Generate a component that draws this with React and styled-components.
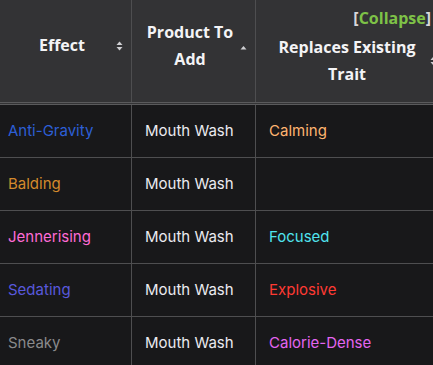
import React from 'react';
import styled, { createGlobalStyle } from 'styled-components';

const GlobalStyle = createGlobalStyle`
  html, body {
    margin: 0;
    padding: 0;
    background: #18181a;
  }
`;

const Wrap = styled.div`
  width: 433px;
  height: 365px;
  overflow: hidden;
  background: #18181a;
  font-family: Inter, "Noto Sans", sans-serif;
`;

const Table = styled.table`
  border-collapse: collapse;
  table-layout: fixed;
  width: 445px;
`;

const Th = styled.th`
  width: ${p => p.w}px;
  height: 85px;
  padding: 3px 8px 14px 8px;
  background: #333335;
  color: #f4f4f6;
  font-family: "Open Sans", Inter, sans-serif;
  font-size: 16px;
  font-weight: 700;
  line-height: 27px;
  border-left: ${p => (p.first ? 'none' : '1px solid #4e4e50')};
  border-bottom: 3px double #5a5a5c;
  vertical-align: middle;
  box-sizing: content-box;
`;

const HeadInner = styled.div`
  display: flex;
  align-items: center;
`;

const Label = styled.div`
  flex: 1;
  text-align: center;
`;

const Collapse = styled.div`
  text-align: right;
  line-height: 31px;
  padding-right: 6px;
  color: #d8d8da;
  a {
    color: #7ec247;
    text-decoration: none;
  }
`;

const Td = styled.td`
  height: 22px;
  padding: 15px 8px 15px ${p => (p.first ? 8 : 13)}px;
  font-size: 15px;
  font-weight: 400;
  line-height: 22px;
  color: ${p => p.color || '#ebebf0'};
  border-left: ${p => (p.first ? 'none' : '1px solid #4e4e50')};
  border-bottom: 1px solid #4e4e50;
  white-space: nowrap;
`;

const SortIcon = ({ dir }) => (
  <svg width="7" height="10" viewBox="0 0 7 10" style={{ flex: 'none' }}>
    {dir === 'asc' ? (
      <path d="M3.5 5 L6.5 8.5 L0.5 8.5 Z" fill="#cfcfd2" />
    ) : (
      <>
        <path d="M3.5 0.5 L6.5 4 L0.5 4 Z" fill="#cfcfd2" />
        <path d="M3.5 9.5 L6.5 6 L0.5 6 Z" fill="#cfcfd2" />
      </>
    )}
  </svg>
);

const rows = [
  { effect: 'Anti-Gravity', ec: '#2d5fd6', trait: 'Calming', tc: '#ffb470' },
  { effect: 'Balding', ec: '#d48a2c', trait: '', tc: '' },
  { effect: 'Jennerising', ec: '#ff6bd6', trait: 'Focused', tc: '#50e4ee' },
  { effect: 'Sedating', ec: '#5858dc', trait: 'Explosive', tc: '#ff3a33' },
  { effect: 'Sneaky', ec: '#8a8a8c', trait: 'Calorie-Dense', tc: '#e465f0' },
];

export default function App() {
  return (
    <Wrap>
      <GlobalStyle />
      <Table>
        <thead>
          <tr>
            <Th first w={115}>
              <HeadInner>
                <Label>Effect</Label>
                <SortIcon />
              </HeadInner>
            </Th>
            <Th w={107}>
              <HeadInner>
                <Label>Product To<br />Add</Label>
                <SortIcon dir="asc" />
              </HeadInner>
            </Th>
            <Th w={173}>
              <Collapse>
                [<a href="#collapse">Collapse</a>]
              </Collapse>
              <HeadInner>
                <Label>Replaces Existing<br />Trait</Label>
                <SortIcon />
              </HeadInner>
            </Th>
          </tr>
        </thead>
        <tbody>
          {rows.map(r => (
            <tr key={r.effect}>
              <Td first color={r.ec}>{r.effect}</Td>
              <Td>Mouth Wash</Td>
              <Td color={r.tc}>{r.trait}</Td>
            </tr>
          ))}
        </tbody>
      </Table>
    </Wrap>
  );
}
